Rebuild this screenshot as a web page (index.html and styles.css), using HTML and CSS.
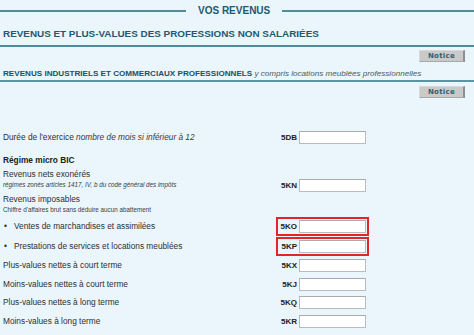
FILE: index.html
```html
<!DOCTYPE html>
<html lang="fr">
<head>
<meta charset="utf-8">
<title>Vos revenus</title>
<link rel="stylesheet" href="styles.css">
</head>
<body>
<div class="page">
  <div class="section-title"><span class="section-line"></span><span class="section-text">VOS REVENUS</span><span class="section-line"></span></div>
  <h1 class="title">REVENUS ET PLUS-VALUES DES PROFESSIONS NON SALARIÉES</h1>
  <div class="notice-row notice-row-1"><span class="notice">Notice</span></div>
  <h2 class="subtitle">REVENUS INDUSTRIELS ET COMMERCIAUX PROFESSIONNELS <em>y compris locations meublées professionnelles</em></h2>
  <div class="notice-row notice-row-2"><span class="notice">Notice</span></div>

  <div class="form">
    <div class="row row-duree">
      <div class="label">Durée de l'exercice <em>nombre de mois si inférieur à 12</em></div>
      <div class="field"><span class="code">5DB</span><span class="input"></span></div>
    </div>
    <div class="row row-regime">
      <div class="label strong">Régime micro BIC</div>
    </div>
    <div class="row row-double row-exo">
      <div class="label">
        <div class="line1">Revenus nets exonérés</div>
        <div class="note note-italic">régimes zonés articles 1417, IV, b du code général des impôts</div>
      </div>
      <div class="field"><span class="code">5KN</span><span class="input"></span></div>
    </div>
    <div class="row row-double row-impos">
      <div class="label">
        <div class="line1">Revenus imposables</div>
        <div class="note">Chiffre d'affaires brut sans déduire aucun abattement</div>
      </div>
    </div>
    <div class="row row-ventes">
      <div class="label"><span class="bullet">•</span>Ventes de marchandises et assimilées</div>
      <div class="field highlight"><span class="code">5KO</span><span class="input"></span></div>
    </div>
    <div class="row row-presta">
      <div class="label"><span class="bullet">•</span>Prestations de services et locations meublées</div>
      <div class="field highlight"><span class="code">5KP</span><span class="input"></span></div>
    </div>
    <div class="row row-first-plain">
      <div class="label">Plus-values nettes à court terme</div>
      <div class="field"><span class="code">5KX</span><span class="input"></span></div>
    </div>
    <div class="row">
      <div class="label">Moins-values nettes à court terme</div>
      <div class="field"><span class="code">5KJ</span><span class="input"></span></div>
    </div>
    <div class="row">
      <div class="label">Plus-values nettes à long terme</div>
      <div class="field"><span class="code">5KQ</span><span class="input"></span></div>
    </div>
    <div class="row">
      <div class="label">Moins-values à long terme</div>
      <div class="field"><span class="code">5KR</span><span class="input"></span></div>
    </div>
  </div>
</div>
</body>
</html>
```

FILE: styles.css
```css
html, body {
  margin: 0;
  padding: 0;
  background: #eaf5fc;
}

.page {
  width: 474px;
  height: 335px;
  overflow: hidden;
  background: #eaf5fc;
  font-family: "Liberation Sans", Arial, sans-serif;
  color: #2f2f2f;
}

.section-title {
  display: grid;
  grid-template-columns: 186px auto 1fr;
  align-items: center;
  height: 21px;
}

.section-line {
  height: 2px;
  background: #4f8d9c;
}

.section-text {
  padding: 0 12px;
  font-size: 10px;
  font-weight: bold;
  color: #1e5a6d;
  line-height: 12px;
}

.title {
  margin: 7px 0 0;
  padding: 0 0 5px 3px;
  font-size: 9.9px;
  line-height: 12px;
  font-weight: bold;
  color: #1e5a6d;
  border-bottom: 2px solid #4f8d9c;
}

.notice-row {
  display: flex;
  justify-content: flex-end;
  padding-right: 9px;
}

.notice-row-1 {
  margin-top: 3px;
}

.notice-row-2 {
  margin-top: 4px;
}

.notice {
  display: flex;
  align-items: center;
  justify-content: center;
  box-sizing: border-box;
  width: 46px;
  height: 12px;
  background: #c9c9c9;
  border-top: 1px solid #d8d8d8;
  border-left: 1px solid #d8d8d8;
  border-right: 2px solid #8e8e8e;
  border-bottom: 1px solid #a8a8a8;
  font-family: "DejaVu Sans", Verdana, sans-serif;
  font-size: 7px;
  font-weight: bold;
  letter-spacing: 0.3px;
  color: #2d5f6f;
}

.subtitle {
  margin: 7px 0 0;
  padding: 0 0 1px 3px;
  font-size: 8.1px;
  line-height: 10px;
  font-weight: bold;
  color: #1e4f60;
  border-bottom: 2px solid #5b94a3;
}

.subtitle em {
  font-weight: normal;
  color: #4d5a60;
}

.form {
  margin-top: 29px;
  padding-left: 3px;
  font-size: 8.3px;
}

.row {
  display: flex;
  align-items: center;
  min-height: 18.5px;
}

.label {
  flex: 0 0 273px;
  line-height: 11px;
  white-space: nowrap;
}

.label em {
  color: #3a3a3a;
}

.strong {
  font-weight: bold;
  color: #222;
}

.bullet {
  display: inline-block;
  width: 10px;
  padding-left: 1px;
}

.field {
  display: flex;
  align-items: center;
  box-sizing: border-box;
  width: 93px;
  height: 18.5px;
  border: 2px solid transparent;
}

.field.highlight {
  border-color: #e1262b;
}

.code {
  box-sizing: border-box;
  width: 21px;
  padding-right: 2px;
  text-align: right;
  font-size: 8px;
  font-weight: bold;
  color: #222;
}

.input {
  box-sizing: border-box;
  width: 67px;
  height: 13px;
  background: #ffffff;
  border: 1px solid #b9bcbf;
  border-top-color: #a9acaf;
}

.row-duree {
  min-height: 21px;
}

.row-duree .field {
  height: 21px;
}

.row-regime {
  margin-top: 4px;
  min-height: 16px;
}

.row-double {
  align-items: flex-end;
}

.line1 {
  line-height: 12px;
}

.note {
  font-size: 6.3px;
  line-height: 10px;
  color: #404040;
}

.note-italic {
  font-style: italic;
}

.row-exo .label {
  padding-bottom: 5px;
}

.row-impos .line1 {
  line-height: 9px;
}

.row-impos .note {
  line-height: 12px;
}

.row-ventes {
  margin-top: 1px;
}

.row-presta {
  margin-top: 1.5px;
}

.row-first-plain {
  margin-top: 1px;
}
```
